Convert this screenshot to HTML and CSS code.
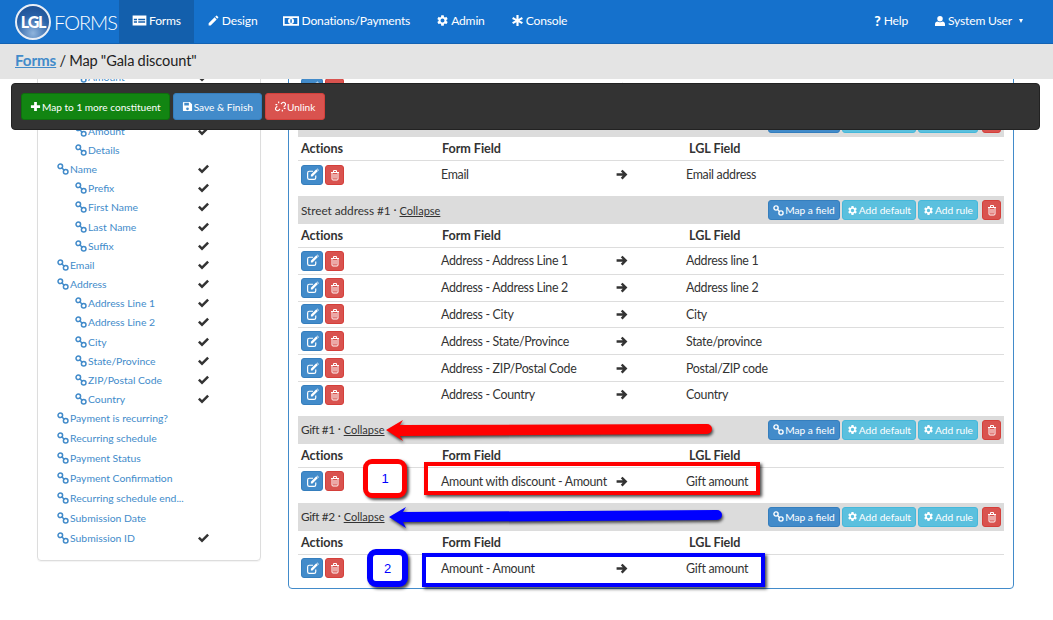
FILE: index.html
```html
<!DOCTYPE html>
<html lang="en">
<head>
<meta charset="utf-8">
<title>Map "Gala discount"</title>
<link rel="stylesheet" href="styles.css">
</head>
<body>
<svg class="defs" width="0" height="0" aria-hidden="true">
  <symbol id="cog" viewBox="0 0 24 24"><path d="M19.14 12.94c.04-.3.06-.61.06-.94 0-.32-.02-.64-.07-.94l2.03-1.58a.49.49 0 0 0 .12-.61l-1.92-3.32a.488.488 0 0 0-.59-.22l-2.39.96c-.5-.38-1.03-.7-1.62-.94l-.36-2.54a.484.484 0 0 0-.48-.41h-3.84c-.24 0-.43.17-.47.41l-.36 2.54c-.59.24-1.13.57-1.62.94l-2.39-.96c-.22-.08-.47 0-.59.22L2.74 8.87c-.12.21-.08.47.12.61l2.03 1.58c-.05.3-.09.63-.09.94s.02.64.07.94l-2.03 1.58a.49.49 0 0 0-.12.61l1.92 3.32c.12.22.37.29.59.22l2.39-.96c.5.38 1.03.7 1.62.94l.36 2.54c.05.24.24.41.48.41h3.84c.24 0 .44-.17.47-.41l.36-2.54c.59-.24 1.13-.56 1.62-.94l2.39.96c.22.08.47 0 .59-.22l1.92-3.32c.12-.22.07-.47-.12-.61l-2.01-1.58zM12 15.6c-1.98 0-3.6-1.62-3.6-3.6s1.62-3.6 3.6-3.6 3.6 1.62 3.6 3.6-1.62 3.6-3.6 3.6z"/></symbol>
  <symbol id="pencil" viewBox="0 0 24 24"><path d="M3 17.25V21h3.75L17.81 9.94l-3.75-3.75L3 17.25zM20.71 7.04a1 1 0 0 0 0-1.41l-2.34-2.34a1 1 0 0 0-1.41 0l-1.83 1.83 3.75 3.75 1.83-1.83z"/></symbol>
  <symbol id="table" viewBox="0 0 24 24"><path fill-rule="evenodd" d="M1 4h22v16H1zM3 9v2.500h5V9zM10 9v2.500h11V9zM3 13v2.500h5V13zM10 13v2.500h11V13z"/></symbol>
  <symbol id="money" viewBox="0 0 24 24"><path fill-rule="evenodd" d="M0 5h24v14H0zM2.500 7.500v9h19v-9zM12 7.500a4.500 4.500 0 1 1 0 9 4.500 4.500 0 0 1 0-9z"/><path fill="#1571cc" d="M11 9.500h2.200v5H11z"/></symbol>
  <symbol id="asterisk" viewBox="0 0 24 24"><path d="M10 2h4v7l6-3.500 2 3.500-6 3 6 3-2 3.500-6-3.500v7h-4v-7l-6 3.500-2-3.500 6-3-6-3 2-3.500 6 3.500z"/></symbol>
  <symbol id="user" viewBox="0 0 24 24"><circle cx="12" cy="7.500" r="5.500"/><path d="M2 22v-3.500c0-3.500 2.500-5.500 5-5.500 1.500 1 3 1.500 5 1.500s3.500-.5 5-1.500c2.500 0 5 2 5 5.500V22z"/></symbol>
  <symbol id="plus" viewBox="0 0 24 24"><path d="M9 2h6v7h7v6h-7v7H9v-7H2V9h7z"/></symbol>
  <symbol id="save" viewBox="0 0 24 24"><path d="M17 2H4a2 2 0 0 0-2 2v16a2 2 0 0 0 2 2h16a2 2 0 0 0 2-2V7l-5-5zm-5 18a3 3 0 1 1 0-6 3 3 0 0 1 0 6zm3-10H5V4h10v6z"/></symbol>
  <symbol id="unlink" viewBox="0 0 24 24"><path fill="none" stroke="currentColor" stroke-width="2.500" d="M13 6.500l2.500-2.500a4.200 4.200 0 0 1 6 6L19 12.500M11 17.500L8.500 20a4.200 4.200 0 0 1-6-6L5 11.500M8 1v4M1 8h4M16 23v-4M23 16h-4"/></symbol>
  <symbol id="link" viewBox="0 0 12 12"><g fill="none" stroke="currentColor" stroke-width="1.500"><circle cx="3.300" cy="3.300" r="2.300"/><circle cx="8.700" cy="8.700" r="2.300"/><path d="M4.500 4.500l3 3"/></g></symbol>
  <symbol id="check" viewBox="0 0 24 24"><path d="M1 13l3.500-3.500 4.500 4.500L19.500 3.500 23 7 9 21z"/></symbol>
  <symbol id="edit" viewBox="0 0 24 24"><path fill="none" stroke="currentColor" stroke-width="2.200" d="M18 14v4a3 3 0 0 1-3 3H6a3 3 0 0 1-3-3V9a3 3 0 0 1 3-3h7"/><path d="M9 12.500L19 2.500l3 3L12 15.500H9zM20 1.500l1-.5 3 3-1 1z"/></symbol>
  <symbol id="trash" viewBox="0 0 24 24"><path fill="none" stroke="currentColor" stroke-width="2" d="M4 7h16M9 6V3h6v3M6 7v13a2 2 0 0 0 2 2h8a2 2 0 0 0 2-2V7M10 10v9M14 10v9"/></symbol>
  <symbol id="arrow" viewBox="0 0 24 24"><path d="M13 3L9.800 6.200 13.300 9.700H2v4.600h11.300l-3.500 3.500L13 21l9-9z"/></symbol>
</svg>

<div class="page">
  <header class="nav">
    <div class="brand">
      <span class="globe">LGL</span>
      <span class="brand-name">FORMS</span>
    </div>
    <a class="nav-item active"><svg class="i wide"><use href="#table"/></svg>Forms</a>
    <a class="nav-item"><svg class="i"><use href="#pencil"/></svg>Design</a>
    <a class="nav-item"><svg class="i wider"><use href="#money"/></svg>Donations/Payments</a>
    <a class="nav-item"><svg class="i"><use href="#cog"/></svg>Admin</a>
    <a class="nav-item"><svg class="i"><use href="#asterisk"/></svg>Console</a>
    <span class="nav-space"></span>
    <a class="nav-item"><b class="q">?</b>Help</a>
    <a class="nav-item user"><svg class="i"><use href="#user"/></svg>System User<span class="caret"></span></a>
  </header>

  <div class="crumbs"><a class="crumb-link">Forms</a> / Map "Gala discount"</div>

  <div class="content">
    <aside class="side">
      <div class="t sub"><svg class="ln"><use href="#link"/></svg><span>Amount</span><svg class="ck"><use href="#check"/></svg></div>
      <div class="t sub"><svg class="ln"><use href="#link"/></svg><span>Details</span></div>
      <div class="t sub hidden-gap"><svg class="ln"><use href="#link"/></svg><span>Amount</span><svg class="ck"><use href="#check"/></svg></div>
      <div class="t sub"><svg class="ln"><use href="#link"/></svg><span>Details</span></div>
      <div class="t"><svg class="ln"><use href="#link"/></svg><span>Name</span><svg class="ck"><use href="#check"/></svg></div>
      <div class="t sub"><svg class="ln"><use href="#link"/></svg><span>Prefix</span><svg class="ck"><use href="#check"/></svg></div>
      <div class="t sub"><svg class="ln"><use href="#link"/></svg><span>First Name</span><svg class="ck"><use href="#check"/></svg></div>
      <div class="t sub"><svg class="ln"><use href="#link"/></svg><span>Last Name</span><svg class="ck"><use href="#check"/></svg></div>
      <div class="t sub"><svg class="ln"><use href="#link"/></svg><span>Suffix</span><svg class="ck"><use href="#check"/></svg></div>
      <div class="t"><svg class="ln"><use href="#link"/></svg><span>Email</span><svg class="ck"><use href="#check"/></svg></div>
      <div class="t"><svg class="ln"><use href="#link"/></svg><span>Address</span><svg class="ck"><use href="#check"/></svg></div>
      <div class="t sub"><svg class="ln"><use href="#link"/></svg><span>Address Line 1</span><svg class="ck"><use href="#check"/></svg></div>
      <div class="t sub"><svg class="ln"><use href="#link"/></svg><span>Address Line 2</span><svg class="ck"><use href="#check"/></svg></div>
      <div class="t sub"><svg class="ln"><use href="#link"/></svg><span>City</span><svg class="ck"><use href="#check"/></svg></div>
      <div class="t sub"><svg class="ln"><use href="#link"/></svg><span>State/Province</span><svg class="ck"><use href="#check"/></svg></div>
      <div class="t sub"><svg class="ln"><use href="#link"/></svg><span>ZIP/Postal Code</span><svg class="ck"><use href="#check"/></svg></div>
      <div class="t sub"><svg class="ln"><use href="#link"/></svg><span>Country</span><svg class="ck"><use href="#check"/></svg></div>
      <div class="t"><svg class="ln"><use href="#link"/></svg><span>Payment is recurring?</span></div>
      <div class="t tall"><svg class="ln"><use href="#link"/></svg><span>Recurring schedule</span></div>
      <div class="t tall"><svg class="ln"><use href="#link"/></svg><span>Payment Status</span></div>
      <div class="t tall"><svg class="ln"><use href="#link"/></svg><span>Payment Confirmation</span></div>
      <div class="t tall"><svg class="ln"><use href="#link"/></svg><span>Recurring schedule end...</span></div>
      <div class="t tall"><svg class="ln"><use href="#link"/></svg><span>Submission Date</span></div>
      <div class="t tall"><svg class="ln"><use href="#link"/></svg><span>Submission ID</span><svg class="ck"><use href="#check"/></svg></div>
    </aside>

    <main class="panel">
      <div class="row first">
        <div class="acts"><span class="b b-edit"><svg class="i"><use href="#edit"/></svg></span><span class="b b-del"><svg class="i"><use href="#trash"/></svg></span></div>
        <div></div><svg class="arr"><use href="#arrow"/></svg><div></div>
      </div>

      <section class="sec">
        <div class="sec-head">
          <span>Email #1 <i class="dot">·</i> <a class="collapse">Collapse</a></span>
          <div class="tools"><span class="b b-edit"><svg class="i"><use href="#link"/></svg>Map a field</span><span class="b b-info"><svg class="i"><use href="#cog"/></svg>Add default</span><span class="b b-info"><svg class="i"><use href="#cog"/></svg>Add rule</span><span class="b b-del square"><svg class="i"><use href="#trash"/></svg></span></div>
        </div>
        <div class="row thead"><div class="h-act">Actions</div><div class="h-form">Form Field</div><div></div><div class="h-lgl">LGL Field</div></div>
        <div class="row">
          <div class="acts"><span class="b b-edit"><svg class="i"><use href="#edit"/></svg></span><span class="b b-del"><svg class="i"><use href="#trash"/></svg></span></div>
          <div class="c-form">Email</div><svg class="arr"><use href="#arrow"/></svg><div>Email address</div>
        </div>
      </section>

      <section class="sec">
        <div class="sec-head">
          <span>Street address #1 <i class="dot">·</i> <a class="collapse">Collapse</a></span>
          <div class="tools"><span class="b b-edit"><svg class="i"><use href="#link"/></svg>Map a field</span><span class="b b-info"><svg class="i"><use href="#cog"/></svg>Add default</span><span class="b b-info"><svg class="i"><use href="#cog"/></svg>Add rule</span><span class="b b-del square"><svg class="i"><use href="#trash"/></svg></span></div>
        </div>
        <div class="row thead"><div class="h-act">Actions</div><div class="h-form">Form Field</div><div></div><div class="h-lgl">LGL Field</div></div>
        <div class="row lined">
          <div class="acts"><span class="b b-edit"><svg class="i"><use href="#edit"/></svg></span><span class="b b-del"><svg class="i"><use href="#trash"/></svg></span></div>
          <div class="c-form">Address - Address Line 1</div><svg class="arr"><use href="#arrow"/></svg><div>Address line 1</div>
        </div>
        <div class="row lined">
          <div class="acts"><span class="b b-edit"><svg class="i"><use href="#edit"/></svg></span><span class="b b-del"><svg class="i"><use href="#trash"/></svg></span></div>
          <div class="c-form">Address - Address Line 2</div><svg class="arr"><use href="#arrow"/></svg><div>Address line 2</div>
        </div>
        <div class="row lined">
          <div class="acts"><span class="b b-edit"><svg class="i"><use href="#edit"/></svg></span><span class="b b-del"><svg class="i"><use href="#trash"/></svg></span></div>
          <div class="c-form">Address - City</div><svg class="arr"><use href="#arrow"/></svg><div>City</div>
        </div>
        <div class="row lined">
          <div class="acts"><span class="b b-edit"><svg class="i"><use href="#edit"/></svg></span><span class="b b-del"><svg class="i"><use href="#trash"/></svg></span></div>
          <div class="c-form">Address - State/Province</div><svg class="arr"><use href="#arrow"/></svg><div>State/province</div>
        </div>
        <div class="row lined">
          <div class="acts"><span class="b b-edit"><svg class="i"><use href="#edit"/></svg></span><span class="b b-del"><svg class="i"><use href="#trash"/></svg></span></div>
          <div class="c-form">Address - ZIP/Postal Code</div><svg class="arr"><use href="#arrow"/></svg><div>Postal/ZIP code</div>
        </div>
        <div class="row">
          <div class="acts"><span class="b b-edit"><svg class="i"><use href="#edit"/></svg></span><span class="b b-del"><svg class="i"><use href="#trash"/></svg></span></div>
          <div class="c-form">Address - Country</div><svg class="arr"><use href="#arrow"/></svg><div>Country</div>
        </div>
      </section>

      <section class="sec">
        <div class="sec-head">
          <span><span class="tight">Gift #1</span> <i class="dot">·</i> <a class="collapse">Collapse</a></span>
          <div class="tools"><span class="b b-edit"><svg class="i"><use href="#link"/></svg>Map a field</span><span class="b b-info"><svg class="i"><use href="#cog"/></svg>Add default</span><span class="b b-info"><svg class="i"><use href="#cog"/></svg>Add rule</span><span class="b b-del square"><svg class="i"><use href="#trash"/></svg></span></div>
        </div>
        <div class="row thead"><div class="h-act">Actions</div><div class="h-form">Form Field</div><div></div><div class="h-lgl">LGL Field</div></div>
        <div class="row">
          <div class="acts"><span class="b b-edit"><svg class="i"><use href="#edit"/></svg></span><span class="b b-del"><svg class="i"><use href="#trash"/></svg></span></div>
          <div class="c-form">Amount with discount - Amount</div><svg class="arr"><use href="#arrow"/></svg><div>Gift amount</div>
        </div>
      </section>

      <section class="sec">
        <div class="sec-head">
          <span><span class="tight">Gift #2</span> <i class="dot">·</i> <a class="collapse">Collapse</a></span>
          <div class="tools"><span class="b b-edit"><svg class="i"><use href="#link"/></svg>Map a field</span><span class="b b-info"><svg class="i"><use href="#cog"/></svg>Add default</span><span class="b b-info"><svg class="i"><use href="#cog"/></svg>Add rule</span><span class="b b-del square"><svg class="i"><use href="#trash"/></svg></span></div>
        </div>
        <div class="row thead"><div class="h-act">Actions</div><div class="h-form">Form Field</div><div></div><div class="h-lgl">LGL Field</div></div>
        <div class="row">
          <div class="acts"><span class="b b-edit"><svg class="i"><use href="#edit"/></svg></span><span class="b b-del"><svg class="i"><use href="#trash"/></svg></span></div>
          <div class="c-form">Amount - Amount</div><svg class="arr"><use href="#arrow"/></svg><div>Gift amount</div>
        </div>
      </section>
    </main>
  </div>

  <div class="actionbar">
    <span class="ab ab-green"><svg class="i"><use href="#plus"/></svg>Map to 1 more constituent</span>
    <span class="ab ab-blue"><svg class="i"><use href="#save"/></svg>Save &amp; Finish</span>
    <span class="ab ab-red"><svg class="i"><use href="#unlink"/></svg>Unlink</span>
  </div>

  <svg class="arrows" viewBox="0 0 1053 620" aria-hidden="true">
    <path fill="#f00" d="M386 430L403 420L400 425L707 424A5 5 0 0 1 707 434L400 436L403 441Z"/>
    <path fill="#00f" d="M389 517L406 507L403 512L717 510A5 5 0 0 1 717 520L403 522L406 528Z"/>
  </svg>
  <div class="note note-red num1">1</div>
  <div class="note note-red box1"></div>
  <div class="note note-blue num2">2</div>
  <div class="note note-blue box2"></div>
</div>
</body>
</html>
```

FILE: styles.css
```css
* { box-sizing: border-box; }
html, body { margin: 0; height: 100%; overflow: hidden; background: #fff; }
body { font-family: Lato, "Liberation Sans", sans-serif; font-size: 12.4px; letter-spacing: -.3px; color: #333; }
.defs { position: absolute; }
.page { position: relative; width: 1053px; height: 620px; overflow: hidden; }

.i { width: 13px; height: 13px; fill: currentColor; flex: none; }
.i.wide { width: 15px; height: 15px; }
.i.wider { width: 16px; height: 16px; }

.nav { display: flex; align-items: stretch; height: 44px; background: #1571cc; color: #fff; border-bottom: 1px solid #1262b3; position: relative; z-index: 2; }
.brand { display: flex; align-items: center; width: 119px; padding-left: 15px; }
.globe { display: flex; align-items: center; justify-content: center; width: 36px; height: 36px; border-radius: 50%; background: radial-gradient(circle at 50% 85%, #8fb4dc 0%, #2a62a8 55%, #1a4a8c 100%); border: 2px solid #e8eef6; font-weight: 900; font-size: 16px; letter-spacing: -1.2px; color: #fff; }
.brand-name { margin-left: 3px; font-size: 20px; font-weight: 300; letter-spacing: -1px; color: #fff; }
.nav-item { display: flex; align-items: center; gap: 2px; padding: 0 13px 2px; font-size: 12.1px; letter-spacing: -.18px; color: #fff; }
.nav-item.active { background: #135fac; }
.nav-space { flex: 1; }
.q { font-size: 14px; font-weight: 900; margin-right: 1px; }
.user { padding-right: 30px; }
.user .i { width: 12px; height: 12px; }
.caret { margin-left: 5px; border-top: 4px solid #fff; border-left: 2.500px solid transparent; border-right: 2.500px solid transparent; }

.crumbs { height: 35px; padding: 6px 15px 0; background: #e4e4e4; font-size: 14.600px; letter-spacing: -.1px; word-spacing: -.4px; color: #222; line-height: 20px; position: relative; z-index: 2; }
.crumb-link { color: #428bca; font-weight: 700; font-size: 15.200px; text-decoration: underline; }

.content { display: flex; align-items: flex-start; height: 541px; padding-left: 37px; gap: 27px; }

.side { width: 224px; height: 542px; margin-top: -60px; padding: 47px 0 0 19px; border: 1px solid #ddd; border-radius: 4px; box-shadow: 0 1px 1px rgba(0,0,0,.05); flex: none; }
.t { display: flex; align-items: center; height: 19.2px; font-size: 10.4px; letter-spacing: 0; color: #428bca; }
.t.sub { padding-left: 18px; }
.t.tall { height: 20px; }
.t span { margin-left: 1px; white-space: nowrap; }
.t.hidden-gap { margin-top: 15.6px; }
.ln { width: 12px; height: 12px; color: #428bca; flex: none; }
.ck { width: 13px; height: 12px; fill: #333; margin-left: auto; margin-right: 50px; flex: none; }

.panel { width: 726px; height: 550px; margin-top: -40px; padding: 34px 9px 0 9px; border: 1px solid #428bca; border-radius: 4px; flex: none; }

.row { display: grid; grid-template-columns: 143px 174px 71px 1fr; align-items: center; height: 27px; white-space: nowrap; }
.row.lined { height: 26.8px; border-bottom: 1px solid #ddd; }
.row.lined + .row:not(.lined) { height: 26px; }
.sec { padding-top: 8px; }
.sec-head { display: flex; align-items: center; justify-content: space-between; height: 28px; padding: 0 3px; background: #dcdcdc; font-size: 11.8px; letter-spacing: -.05px; }
.tight { letter-spacing: -.4px; }
.dot { font-style: normal; font-weight: 400; position: relative; top: -1px; }
.collapse { font-size: 11px; letter-spacing: 0; text-decoration: underline; color: #333; }
.tools { display: flex; gap: 2px; }

.thead { height: 24px; border-bottom: 1px solid #ddd; font-weight: 700; font-size: 12.6px; letter-spacing: -.05px; }
.h-act { padding-left: 3px; }
.h-form { padding-left: 1px; }
.h-lgl { padding-left: 3px; }

.acts { display: flex; gap: 2px; padding-left: 3px; }
.b { display: inline-flex; align-items: center; justify-content: center; gap: 1px; height: 20px; padding: 0 4px; border-radius: 3px; font-size: 10.2px; letter-spacing: 0; color: #fff; white-space: nowrap; }
.b-edit { background: #428bca; border: 1px solid #357ebd; }
.b-info { background: #5bc0de; border: 1px solid #46b8da; }
.b-del { background: #d9534f; border: 1px solid #d43f3a; }
.b-del, .square { width: 19px; padding: 0; }
.square { margin-left: 2px; }
.b .i { width: 11px; height: 11px; }
.acts .b-edit { width: 22px; padding: 0; }
.acts .b-edit .i { width: 13px; height: 13px; }
.acts .b-del .i, .square .i { width: 12px; height: 12px; }
.arr { width: 14px; height: 13px; fill: #333; }

.actionbar { position: absolute; left: 11px; top: 83px; width: 1029px; height: 47px; display: flex; align-items: center; gap: 3px; padding: 0 9px; background: #333; border: 1px solid #222; border-radius: 4px; z-index: 3; }
.ab { display: flex; align-items: center; gap: 1px; height: 27px; padding: 0 8px; border-radius: 3px; font-size: 10.1px; letter-spacing: 0; color: #fff; white-space: nowrap; }
.ab .i { width: 11px; height: 11px; }
.ab-green { background: #128512; border: 1px solid #0e6f0e; }
.ab-blue { background: #428bca; border: 1px solid #357ebd; }
.ab-red { background: #d9534f; border: 1px solid #d43f3a; padding: 0 9px; }

.arrows { position: absolute; left: 0; top: 0; width: 1053px; height: 620px; filter: drop-shadow(1px 2px 1.500px rgba(0,0,0,.7)); z-index: 1; }
.note { position: absolute; z-index: 1; box-shadow: 2px 2px 3px rgba(0,0,0,.7); font-family: "Liberation Sans", sans-serif; font-size: 13px; letter-spacing: 0; color: #00f; display: flex; align-items: center; justify-content: center; }
.note-red { border: 5px solid #f00; }
.note-blue { border: 5px solid #00f; }
.num1 { left: 363px; top: 459px; width: 44px; height: 39px; border-radius: 9px; background: #fff; }
.box1 { left: 424px; top: 462px; width: 336px; height: 33px; border-width: 4px; }
.num2 { left: 367px; top: 549px; width: 41px; height: 38px; border-width: 6px; border-radius: 9px; background: #fff; }
.box2 { left: 422px; top: 553px; width: 343px; height: 34px; border-width: 4px; }
```
